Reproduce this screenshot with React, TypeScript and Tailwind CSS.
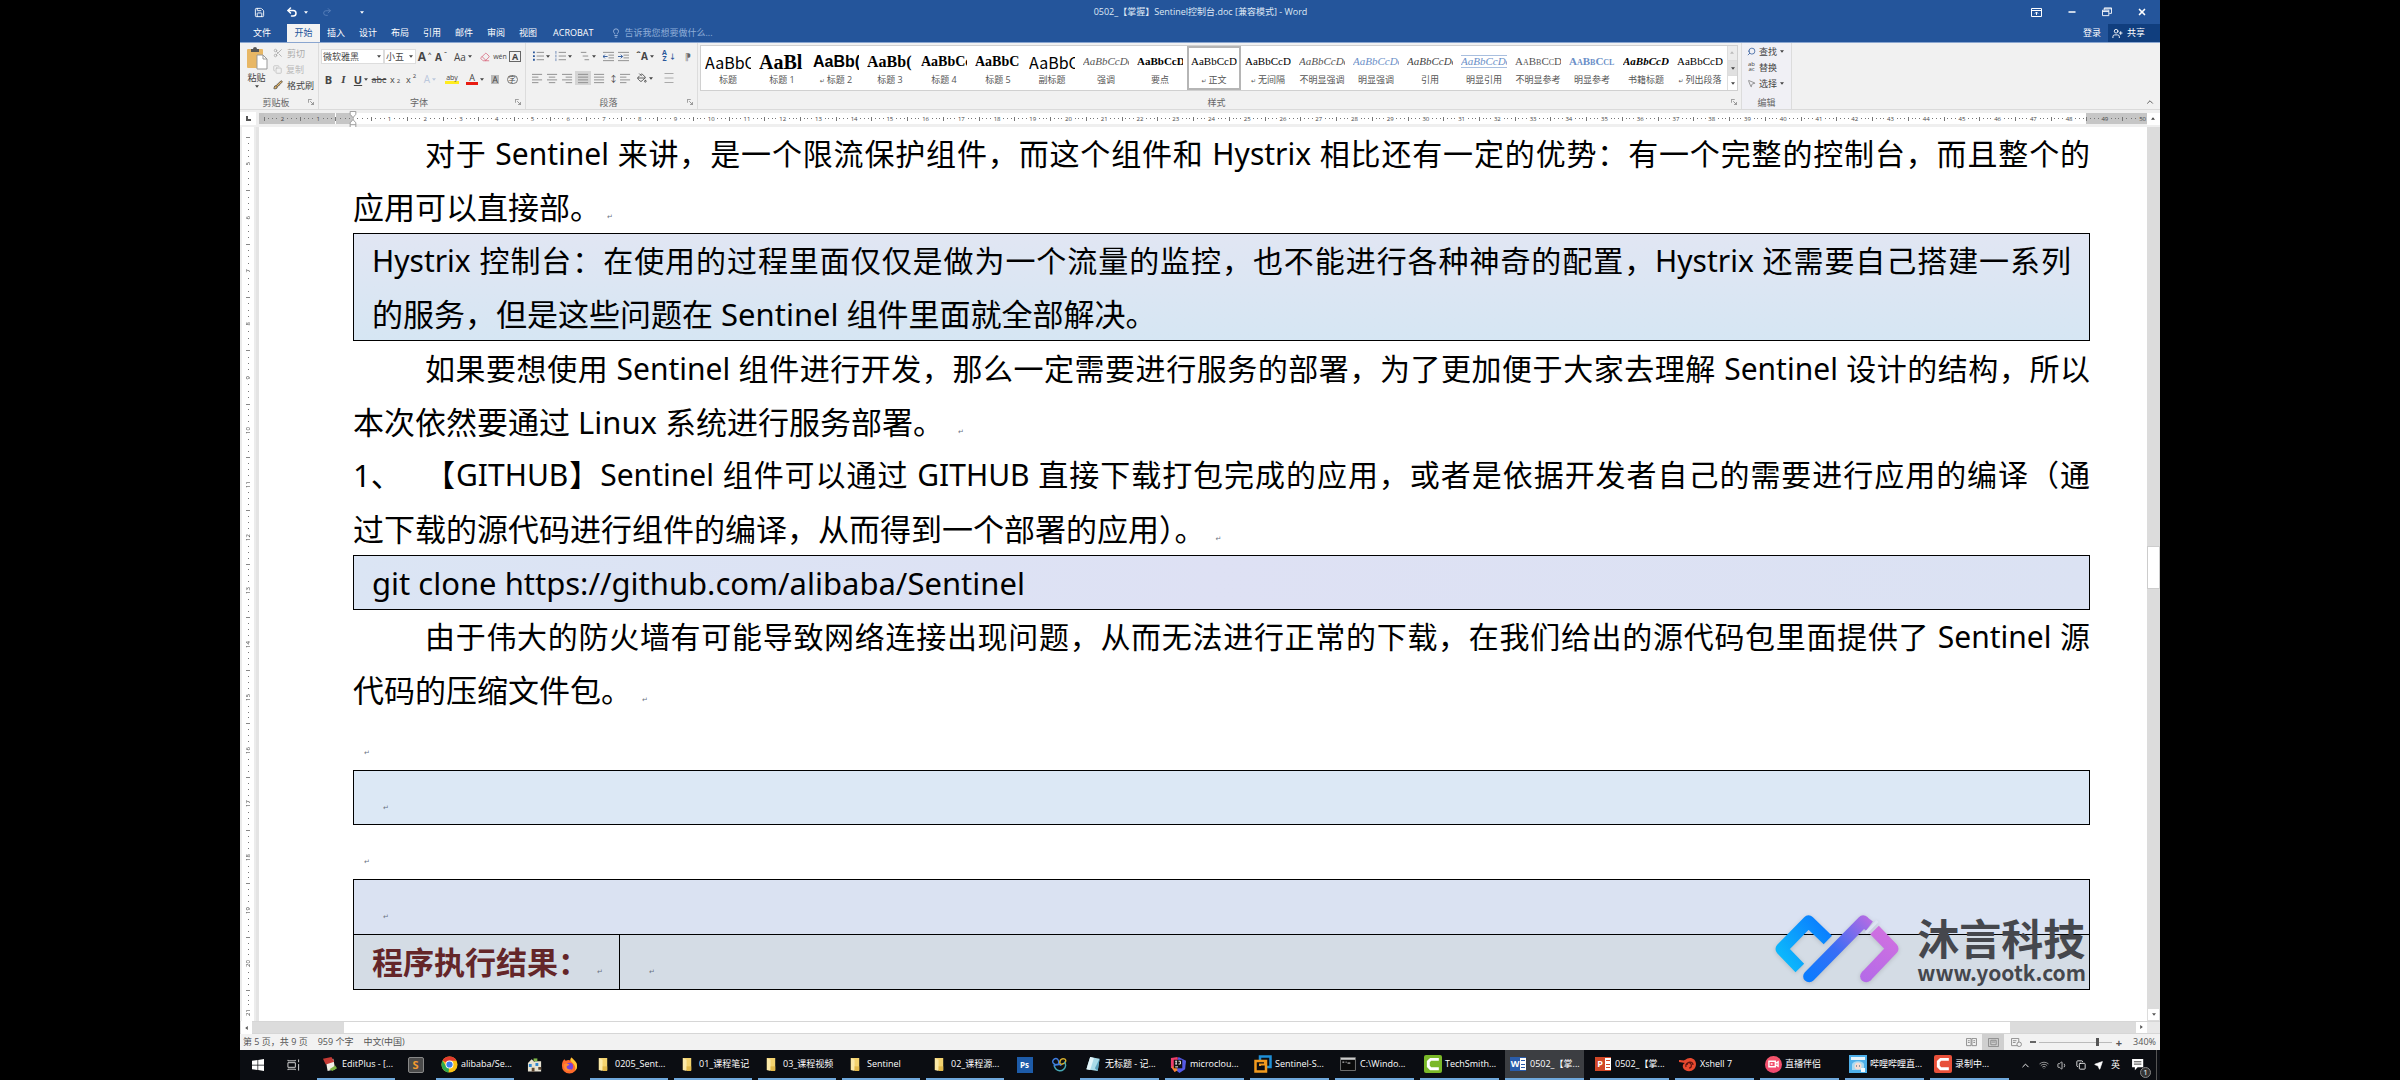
import type { ReactNode } from "react";
import {
  Brush,
  ChevronUp,
  Copy,
  Eraser,
  Lightbulb,
  Minus,
  MousePointer2,
  PaintBucket,
  Save,
  Scissors,
  Search,
  Send,
  Undo2,
  Redo2,
  UserPlus,
  Volume1,
  Wifi,
  X,
} from "lucide-react";

type StyleItem = { label: string; sample: string; look: string; mark?: boolean };

const TABS = ["插入", "设计", "布局", "引用", "邮件", "审阅", "视图", "ACROBAT"];

const STYLES: StyleItem[] = [
  { label: "标题", sample: "AaBbC", look: "text-[16px] font-['Noto_Sans_CJK_SC']" },
  { label: "标题 1", sample: "AaBl", look: "text-[20px] font-bold font-['Liberation_Serif']" },
  { label: "标题 2", sample: "AaBb(", look: "text-[16px] font-bold font-['Liberation_Sans']", mark: true },
  { label: "标题 3", sample: "AaBb(", look: "text-[16px] font-bold font-['Liberation_Serif']" },
  { label: "标题 4", sample: "AaBbCc", look: "text-[14px] font-bold font-['Liberation_Serif']" },
  { label: "标题 5", sample: "AaBbC", look: "text-[14px] font-bold font-['Liberation_Serif']" },
  { label: "副标题", sample: "AaBbC", look: "text-[16px] font-['Noto_Sans_CJK_SC']" },
  { label: "强调", sample: "AaBbCcDc", look: "text-[11px] italic text-[#555] font-['Liberation_Serif']" },
  { label: "要点", sample: "AaBbCcD", look: "text-[11px] font-bold font-['Liberation_Serif']" },
  { label: "正文", sample: "AaBbCcDc", look: "text-[11px] font-['Liberation_Serif']", mark: true },
  { label: "无间隔", sample: "AaBbCcDc", look: "text-[11px] font-['Liberation_Serif']", mark: true },
  { label: "不明显强调", sample: "AaBbCcDc", look: "text-[11px] italic text-[#555] font-['Liberation_Serif']" },
  { label: "明显强调", sample: "AaBbCcDc", look: "text-[11px] italic text-[#6b8fc7] font-['Liberation_Serif']" },
  { label: "引用", sample: "AaBbCcDc", look: "text-[11px] italic text-[#444] font-['Liberation_Serif']" },
  { label: "明显引用", sample: "AaBbCcDc", look: "text-[11px] italic text-[#6b8fc7] border-y border-[#a9bfdf] font-['Liberation_Serif']" },
  { label: "不明显参考", sample: "AaBbCcD", look: "text-[11px] [font-variant:small-caps] text-[#555] font-['Liberation_Serif']" },
  { label: "明显参考", sample: "AaBbCcl", look: "text-[11px] font-bold [font-variant:small-caps] text-[#6b8fc7] font-['Liberation_Serif']" },
  { label: "书籍标题", sample: "AaBbCcD", look: "text-[11px] font-bold italic font-['Liberation_Serif']" },
  { label: "列出段落", sample: "AaBbCcDc", look: "text-[11px] font-['Liberation_Serif']", mark: true },
];

const H_RULER = Array.from({ length: 52 }, (_, i) => i - 2);
const V_RULER = Array.from({ length: 16 }, (_, i) => i + 5);

/* ---------- small pieces ---------- */

function Caret() {
  return (
    <svg viewBox="0 0 6 4" className="h-[3px] w-[4px] shrink-0" fill="currentColor">
      <path d="M0 0h6L3 4z" />
    </svg>
  );
}

function Launcher() {
  return (
    <svg viewBox="0 0 8 8" className="size-[6px]" fill="none" stroke="#777" strokeWidth="1">
      <path d="M.5 5V.5H5M3 3l4 4M7.500 4v3.500H4" />
    </svg>
  );
}

function Mark({ className = "" }: { className?: string }) {
  return <span className={`font-['DejaVu_Sans'] text-[7px] leading-none font-normal text-gray-500 ${className}`}>↵</span>;
}

function Lines({ kind }: { kind: "left" | "center" | "right" | "bullet" | "number" | "multi" | "just" }) {
  const d = {
    left: "M0 1.500h11M0 4.500h7M0 7.500h11M0 10.500h7",
    center: "M0 1.500h11M2 4.500h7M0 7.500h11M2 10.500h7",
    right: "M0 1.500h11M4 4.500h7M0 7.500h11M4 10.500h7",
    just: "M0 1.500h11M0 4.500h11M0 7.500h11M0 10.500h11",
    bullet: "M4 1.500h8M4 5.500h8M4 9.500h8",
    number: "M4 1.500h8M4 5.500h8M4 9.500h8",
    multi: "M2 1.500h6M4 5.500h6M6 9.500h5",
  }[kind];
  return (
    <svg viewBox="0 0 12 12" className="size-[11px]" fill="none" stroke="#8a8a8a" strokeWidth="1">
      <path d={d} />
      {kind === "bullet" && <path d="M0 1.500h2M0 5.500h2M0 9.500h2" stroke="#2b579a" strokeWidth="2" />}
      {kind === "number" && <path d="M1 0v3M1 4v3M1 8v3" stroke="#6a86b5" />}
    </svg>
  );
}

function Indent({ flip }: { flip?: boolean }) {
  return (
    <svg viewBox="0 0 12 12" className="size-[11px]" fill="none" stroke="#8a8a8a">
      <path d="M0 1.500h12M6 4.500h6M6 7.500h6M0 10.500h12" />
      <path d={flip ? "M0 6h5M3 4l2 2-2 2" : "M5 6H0M2 4L0 6l2 2"} stroke="#2b579a" />
    </svg>
  );
}

function Tool({ label, children, className = "" }: { label: string; children: ReactNode; className?: string }) {
  return (
    <button aria-label={label} className={`flex h-[14px] items-center justify-center gap-[2px] ${className}`}>
      {children}
    </button>
  );
}

/* ---------- title bar + tabs ---------- */

function TitleBar() {
  return (
    <header className="bg-[#24559b] text-[9px] text-white">
      <div className="flex h-[24px] items-center">
        <div className="flex flex-1 items-center pl-[14px]">
          <button aria-label="保存"><Save className="size-[11px]" /></button>
          <button aria-label="撤消" className="ml-[21px] flex items-center gap-[6px]">
            <Undo2 className="size-[12px]" strokeWidth={3} />
            <Caret />
          </button>
          <button aria-label="恢复" className="ml-[14px] text-[#5d83bd]"><Redo2 className="size-[10px]" /></button>
          <button aria-label="自定义快速访问工具栏" className="ml-[28px]"><Caret /></button>
        </div>
        <h1 className="text-[#dfe8f5]">0502_【掌握】Sentinel控制台.doc [兼容模式] - Word</h1>
        <div className="flex flex-1 items-center justify-end gap-[25px] pr-[13px]">
          <button aria-label="功能区显示选项">
            <svg viewBox="0 0 11 9" className="h-[9px] w-[11px]" fill="none" stroke="currentColor">
              <path d="M.5 .5h10v8H.5zM.5 2.500h10M5.500 7V4M4 5.500L5.500 4 7 5.500" />
            </svg>
          </button>
          <button aria-label="最小化"><Minus className="size-[10px]" strokeWidth={4} /></button>
          <button aria-label="向下还原">
            <svg viewBox="0 0 11 11" className="size-[10px]" fill="none" stroke="currentColor">
              <path d="M.5 3.500h7v6h-7zM.5 5h7M2.500 3V1h8v6H8M2.500 2h8" />
            </svg>
          </button>
          <button aria-label="关闭"><X className="size-[10px]" strokeWidth={4} /></button>
        </div>
      </div>
      <nav className="flex h-[19px] items-stretch border-b border-[#8aa6d0]">
        <button className="w-[47px] pr-[3px]">文件</button>
        <button className="w-[33px] bg-[#f3f3f3] text-[#24559b]">开始</button>
        {TABS.map((t) => (
          <button key={t} className={t === "ACROBAT" ? "px-[9px]" : "px-[7px]"}>{t}</button>
        ))}
        <label className="ml-[8px] flex items-center gap-[4px] text-[#a9c1e4]">
          <Lightbulb className="size-[10px]" />
          <input
            aria-label="操作说明搜索"
            placeholder="告诉我您想要做什么..."
            className="w-[120px] bg-transparent outline-none placeholder:text-[#8fadd8]"
          />
        </label>
        <button className="ml-auto px-[7px]">登录</button>
        <button className="flex w-[52px] items-center gap-[4px] bg-[#103e7e] pl-[4px]">
          <UserPlus className="size-[11px]" />
          共享
        </button>
      </nav>
    </header>
  );
}

/* ---------- ribbon ---------- */

function Group({ label, launcher, children, className = "" }: { label: string; launcher?: boolean; children: ReactNode; className?: string }) {
  return (
    <section className={`flex flex-col border-r border-[#dcdcdc] ${className}`}>
      <div className="flex-1">{children}</div>
      <div className="flex h-[14px] items-center px-[4px] text-[9px] text-[#666]">
        <span className="flex-1 text-center">{label}</span>
        {launcher && <button aria-label={`${label}设置`}><Launcher /></button>}
      </div>
    </section>
  );
}

function Ribbon() {
  return (
    <div className="flex h-[66px] bg-[#f1f1f1] text-[9px] leading-none text-[#444]">
      <Group label="剪贴板" launcher className="w-[79px] shrink-0">
        <div className="flex pt-[3px]">
          <button className="flex w-[33px] flex-col items-center gap-[3px]">
            <svg viewBox="0 0 22 24" className="h-[24px] w-[22px]">
              <rect x="1" y="3" width="16" height="19" rx="1" fill="#e8b765" />
              <path d="M5 6V3h2a2 2 0 0 1 4 0h2v3z" fill="#555" />
              <path d="M11 9h6l4 4v10H11z" fill="#fff" stroke="#999" />
              <path d="M17 9v4h4" fill="none" stroke="#999" />
            </svg>
            粘贴
            <Caret />
          </button>
          <div className="flex flex-col gap-[2px]">
            <button className="flex h-[14px] items-center gap-[4px] text-[#aaa]"><Scissors className="size-[10px]" />剪切</button>
            <button className="flex h-[14px] items-center gap-[4px] text-[#bbb]"><Copy className="size-[9px]" />复制</button>
            <button className="flex h-[14px] items-center gap-[4px]"><Brush className="size-[10px]" fill="#e8b765" />格式刷</button>
          </div>
        </div>
      </Group>

      <Group label="字体" launcher className="w-[207px] shrink-0">
        <div className="flex items-center pt-[6px] pl-[2px]">
          <div className="relative">
            <select aria-label="字体" className="h-[15px] w-[63px] appearance-none border border-[#ddd] bg-white pl-px text-[9px] leading-none">
              <option>微软雅黑</option>
            </select>
            <span className="pointer-events-none absolute top-[6px] right-[3px]"><Caret /></span>
          </div>
          <div className="relative">
            <select aria-label="字号" className="h-[15px] w-[32px] appearance-none border border-[#ddd] bg-white pl-px text-[9px] leading-none">
              <option>小五</option>
            </select>
            <span className="pointer-events-none absolute top-[6px] right-[3px]"><Caret /></span>
          </div>
          <Tool label="增大字号" className="w-[17px] text-[12px] font-bold">A<sup className="text-[6px]">^</sup></Tool>
          <Tool label="减小字号" className="w-[16px] text-[10px] font-bold">A<sup className="text-[6px]">ˇ</sup></Tool>
          <Tool label="更改大小写" className="w-[28px] text-[10px]">Aa<Caret /></Tool>
          <Tool label="清除格式" className="w-[16px] text-[#d96a80]"><Eraser className="size-[10px]" /></Tool>
          <Tool label="拼音指南" className="w-[14px] text-[7px]">wén</Tool>
          <Tool label="字符边框" className="w-[16px]"><span className="border border-[#666] px-[2px] text-[9px] font-bold">A</span></Tool>
        </div>
        <div className="flex items-center pt-[8px] pl-[2px] text-[11px]">
          <Tool label="加粗" className="w-[15px] font-bold">B</Tool>
          <Tool label="倾斜" className="w-[15px] font-['Liberation_Serif'] font-bold italic">I</Tool>
          <Tool label="下划线" className="w-[20px] font-bold underline">U<Caret /></Tool>
          <Tool label="删除线" className="w-[16px] text-[9px] line-through">abc</Tool>
          <Tool label="下标" className="w-[16px] text-[9px]">x<sub className="text-[6px]">2</sub></Tool>
          <Tool label="上标" className="w-[16px] text-[9px]">x<sup className="text-[6px]">2</sup></Tool>
          <Tool label="文本效果" className="w-[22px] text-[10px] text-[#bbc8dd]">A<Caret /></Tool>
          <Tool label="突出显示" className="w-[22px] text-[7px]"><span className="border-b-3 border-[#ffec1f] px-px">aby</span></Tool>
          <Tool label="字体颜色" className="w-[24px] text-[9px]"><span className="border-b-3 border-[#e81c12] px-[3px]">A</span><Caret /></Tool>
          <Tool label="字符底纹" className="w-[16px] text-[9px]"><span className="bg-[#bbb] px-px">A</span></Tool>
          <Tool label="带圈字符" className="w-[18px]"><span className="rounded-full border border-[#777] px-px text-[7px]">字</span></Tool>
        </div>
      </Group>

      <Group label="段落" launcher className="w-[172px] shrink-0">
        <div className="flex items-center pt-[6px] pl-[4px]">
          <Tool label="项目符号" className="w-[22px]"><Lines kind="bullet" /><Caret /></Tool>
          <Tool label="编号" className="w-[22px]"><Lines kind="number" /><Caret /></Tool>
          <Tool label="多级列表" className="w-[27px]"><Lines kind="multi" /><Caret /></Tool>
          <Tool label="减少缩进" className="w-[15px]"><Indent /></Tool>
          <Tool label="增加缩进" className="w-[15px]"><Indent flip /></Tool>
          <Tool label="中文版式" className="w-[28px] text-[10px] font-bold">ˆA<Caret /></Tool>
          <Tool label="排序" className="w-[20px] text-[7px] font-bold text-[#2b579a]"><span className="leading-[6px]">A<br />Z</span>↓</Tool>
          <Tool label="显示编辑标记" className="w-[18px] text-[9px] text-[#666]">⁋</Tool>
        </div>
        <div className="flex items-center pt-[8px] pl-[4px]">
          <Tool label="左对齐" className="w-[15px]"><Lines kind="left" /></Tool>
          <Tool label="居中" className="w-[15px]"><Lines kind="center" /></Tool>
          <Tool label="右对齐" className="w-[15px]"><Lines kind="right" /></Tool>
          <Tool label="两端对齐" className="w-[16px] bg-[#d5d5d5]"><Lines kind="just" /></Tool>
          <Tool label="分散对齐" className="w-[17px]"><Lines kind="just" /></Tool>
          <Tool label="行距" className="w-[24px]">↕<Lines kind="left" /></Tool>
          <Tool label="底纹" className="w-[26px]"><PaintBucket className="size-[10px]" /><Caret /></Tool>
          <Tool label="边框" className="w-[22px]">
            <svg viewBox="0 0 10 10" className="size-[10px]" fill="none" stroke="#aaa"><path d="M.5 .5h9M.5 5h9M.5 9.500h9" /></svg>
          </Tool>
        </div>
      </Group>

      <Group label="样式" launcher className="shrink-0">
        <div className="mt-[2px] mr-[3px] ml-[2px] flex h-[46px] border border-[#d0d0d0] bg-white">
          {STYLES.map((s) => (
            <button
              key={s.label}
              className={`flex w-[54px] flex-col items-center border-2 ${s.label === "正文" ? "border-[#b5b5b5]" : "border-transparent"}`}
            >
              <span className="flex h-[27px] w-[46px] items-center overflow-hidden whitespace-nowrap text-black">
                <span className={s.look}>{s.sample}</span>
              </span>
              <span className="text-[9px] whitespace-nowrap text-[#555]">
                {s.mark && <span className="mr-[2px] font-['DejaVu_Sans'] text-[6px]">↵</span>}
                {s.label}
              </span>
            </button>
          ))}
          <div className="flex w-[10px] flex-col border-l border-[#ddd] bg-[#ececec]">
            <button aria-label="上一行" className="flex flex-1 rotate-180 items-center justify-center text-[#bbb]"><Caret /></button>
            <button aria-label="下一行" className="flex flex-1 items-center justify-center border-y border-[#ddd] bg-[#e0e0e0]"><Caret /></button>
            <button aria-label="更多样式" className="flex flex-1 items-center justify-center bg-white"><Caret /></button>
          </div>
        </div>
      </Group>

      <Group label="编辑" className="w-[50px] shrink-0 bg-[#f0f0f5]">
        <div className="flex flex-col gap-[2px] pt-[1px] pl-[5px]">
          <button className="flex h-[14px] items-center gap-[3px]"><Search className="size-[9px] -scale-x-100 text-[#2b579a]" />查找<Caret /></button>
          <button className="flex h-[14px] items-center gap-[3px]"><span className="w-[9px] text-[6px] leading-[5px]">ab<br />ac</span>替换</button>
          <button className="flex h-[14px] items-center gap-[3px]"><MousePointer2 className="size-[9px] text-[#777]" />选择<Caret /></button>
        </div>
      </Group>

      <button aria-label="折叠功能区" className="mt-auto mr-[5px] mb-[2px] ml-auto"><ChevronUp className="size-[10px]" /></button>
    </div>
  );
}

/* ---------- rulers ---------- */

function Dots({ vertical }: { vertical?: boolean }) {
  return (
    <span className={`flex flex-1 items-center justify-evenly ${vertical ? "flex-col" : ""}`}>
      <i className="size-px bg-[#777]" />
      <i className="size-px bg-[#777]" />
      <i className="size-px bg-[#777]" />
    </span>
  );
}

function TopRuler() {
  return (
    <div className="flex h-[18px] items-center border-t border-[#dadada] bg-[#efefef] text-[6px] leading-none text-[#444]">
      <div className="mr-[3px] flex h-[13px] w-[16px] items-center justify-center bg-white">
        <i className="size-[5px] border-b-2 border-l-2 border-[#555]" />
      </div>
      <div className="h-[11px] w-[5px] bg-[#c3c3c3]" />
      <div className="relative flex h-[11px] flex-1 bg-white">
        {H_RULER.map((n) => (
          <div key={n} className={`flex flex-1 items-center ${n < 0 || n > 48 ? "bg-[#c6c6c6]" : ""}`}>
            <i className="h-[4px] w-px bg-[#777]" />
            <span className={`flex flex-1 self-stretch ${n === 0 ? "bg-[#c6c6c6]" : ""}`}><Dots /></span>
            {n !== 0 && <span>{Math.abs(n)}</span>}
            <Dots />
          </div>
        ))}
        <svg viewBox="0 0 8 18" className="absolute top-[-2px] left-[85px] h-[17px] w-[8px]" fill="#fff" stroke="#999">
          <path d="M1 .5h6v3L4 7 1 3.500zM1 17.500v-5L4 9l3 3.500v5zM1 14.500h6" />
        </svg>
      </div>
      <div className="flex h-[11px] w-[25px] items-center bg-[#c6c6c6]">
        <i className="h-[4px] w-px bg-[#777]" />
        <Dots />
        <span className="mr-px">50</span>
      </div>
      <button aria-label="向上滚动" className="flex h-[12px] w-[13px] rotate-180 items-center justify-center bg-white"><Caret /></button>
    </div>
  );
}

function SideRuler() {
  return (
    <div className="flex w-[19px] shrink-0 flex-col items-center border-r-3 border-[#e4e4e4] bg-[#ececec] text-[6px] leading-none text-[#444]">
      <div className="h-[10px] w-[12px] bg-white" />
      {V_RULER.map((n) => (
        <div key={n} className="flex w-[12px] flex-1 flex-col items-center bg-white">
          <i className="h-px w-[4px] bg-[#888]" />
          <Dots vertical />
          <span className="rotate-180 [writing-mode:vertical-rl]">{n}</span>
          <Dots vertical />
        </div>
      ))}
      <div className="flex h-[31px] w-[12px] flex-col items-center bg-white">
        <i className="h-px w-[4px] bg-[#888]" />
        <Dots vertical />
        <span className="mb-[5px] rotate-180 [writing-mode:vertical-rl]">21</span>
      </div>
    </div>
  );
}

/* ---------- document ---------- */

// full lines are stretched to both margins, so they start a touch smaller
function Line({ children, indent, full }: { children: ReactNode; indent?: boolean; full?: boolean }) {
  return (
    <span className={`block h-[53px] leading-[54px] whitespace-nowrap ${indent ? "pl-[72px]" : ""} ${full ? "text-[30px] [text-align-last:justify]" : ""}`}>
      {children}
    </span>
  );
}

function EmptyLine({ className = "" }: { className?: string }) {
  return (
    <div className={`pt-[33px] text-[7px] leading-none ${className}`}>
      <Mark />
    </div>
  );
}

function Watermark() {
  return (
    <div className="absolute right-[61px] bottom-[34px] flex items-center gap-[17px]">
      <svg viewBox="100 95 380 225" className="h-[75px] w-[127px] drop-shadow-sm" fill="none" strokeWidth="36" strokeLinejoin="round">
        <defs>
          <linearGradient id="wm-left" gradientUnits="userSpaceOnUse" x1="110" y1="250" x2="270" y2="130">
            <stop offset="0" stopColor="#0cc0fb" />
            <stop offset="1" stopColor="#0a78ff" />
          </linearGradient>
          <linearGradient id="wm-mid" gradientUnits="userSpaceOnUse" x1="200" y1="290" x2="400" y2="110">
            <stop offset="0" stopColor="#0a7cff" />
            <stop offset=".45" stopColor="#3a6df5" />
            <stop offset="1" stopColor="#bf6be2" />
          </linearGradient>
          <linearGradient id="wm-right" gradientUnits="userSpaceOnUse" x1="440" y1="150" x2="370" y2="300">
            <stop offset="0" stopColor="#d070e0" />
            <stop offset="1" stopColor="#b46ae8" />
          </linearGradient>
        </defs>
        <path d="M264 179L206 123 125 206 180 263" stroke="url(#wm-left)" />
        <path d="M208 288L370 123" stroke="url(#wm-mid)" strokeLinecap="round" />
        <path d="M370 123L389 137" stroke="url(#wm-mid)" strokeWidth="34" />
        <path d="M404 149L458 205 379 288" stroke="url(#wm-right)" />
        <circle cx="379" cy="288" r="18" fill="url(#wm-right)" stroke="none" />
        <path d="M413 122L378 158" stroke="#dce3f2" strokeWidth="9" />
      </svg>
      <div className="font-['Noto_Sans_CJK_SC',sans-serif] font-bold text-[#45474d]">
        <div className="text-[42px] leading-[44px]">沐言科技</div>
        <div className="text-center text-[21px] leading-[26px]">www.yootk.com</div>
      </div>
    </div>
  );
}

function Document() {
  return (
    <main className="relative min-w-0 flex-1 overflow-hidden bg-white pr-[57px] pl-[94px] font-['Noto_Sans','Noto_Sans_CJK_SC',sans-serif] text-[31px] text-black">
      <p>
        <Line indent full>对于 Sentinel 来讲，是一个限流保护组件，而这个组件和 Hystrix 相比还有一定的优势：有一个完整的控制台，而且整个的</Line>
        <Line>应用可以直接部。<Mark className="ml-[6px]" /></Line>
      </p>
      <p className="mb-px border border-black bg-linear-to-b from-[#e1e6f3] to-[#d6e6f3] px-[18px]">
        <Line full>Hystrix 控制台：在使用的过程里面仅仅是做为一个流量的监控，也不能进行各种神奇的配置，Hystrix 还需要自己搭建一系列</Line>
        <Line>的服务，但是这些问题在 Sentinel 组件里面就全部解决。</Line>
      </p>
      <p>
        <Line indent full>如果要想使用 Sentinel 组件进行开发，那么一定需要进行服务的部署，为了更加便于大家去理解 Sentinel 设计的结构，所以</Line>
        <Line>本次依然要通过 Linux 系统进行服务部署。<Mark className="ml-[14px]" /></Line>
      </p>
      <div>
        <div className="flex">
          <span className="w-[72px] leading-[54px]">1、</span>
          <span className="h-[53px] flex-1"><Line full>【GITHUB】Sentinel 组件可以通过 GITHUB 直接下载打包完成的应用，或者是依据开发者自己的需要进行应用的编译（通</Line></span>
        </div>
        <Line>过下载的源代码进行组件的编译，从而得到一个部署的应用）。<Mark className="ml-[10px]" /></Line>
      </div>
      <p className="border border-black bg-linear-to-r from-[#dbe5f4] via-[#dee1f4] to-[#dbe2f3] px-[18px]">
        <Line>git clone https://github.com/alibaba/Sentinel</Line>
      </p>
      <p>
        <Line indent full>由于伟大的防火墙有可能导致网络连接出现问题，从而无法进行正常的下载，在我们给出的源代码包里面提供了 Sentinel 源</Line>
        <Line>代码的压缩文件包。<Mark className="ml-[10px]" /></Line>
      </p>
      <EmptyLine className="h-[54px] pl-[11px]" />
      <EmptyLine className="h-[55px] border border-black bg-[#dce8f5] pl-[29px]" />
      <EmptyLine className="h-[54px] pl-[11px]" />
      <table className="w-full border-collapse">
        <tbody>
          <tr className="h-[55px] bg-[#dae2f2]">
            <td colSpan={2} className="border border-black pt-[33px] pl-[29px] align-top text-[7px] leading-none"><Mark /></td>
          </tr>
          <tr className="h-[55px] bg-[#d4dce5]">
            <th scope="row" className="w-[266px] border border-black pl-[18px] text-left leading-[53px] font-bold whitespace-nowrap text-[#642629]">
              程序执行结果：<Mark className="ml-[8px]" />
            </th>
            <td className="border border-black pt-[33px] pl-[29px] align-top text-[7px] leading-none"><Mark /></td>
          </tr>
        </tbody>
      </table>
      <Watermark />
    </main>
  );
}

function VScroll() {
  return (
    <div className="flex w-[13px] shrink-0 flex-col bg-[#dcdcdc] text-[#555]">
      <div className="flex-1" />
      <div className="h-[43px] border border-[#ccc] bg-white" />
      <div className="flex-1" />
      <button aria-label="向下滚动" className="m-px flex h-[11px] items-center justify-center bg-white"><Caret /></button>
    </div>
  );
}

function HScroll() {
  return (
    <div className="flex h-[13px] items-stretch border-y border-[#d6d6d6] bg-[#dcdcdc] text-[#555]">
      <button aria-label="向左滚动" className="flex w-[13px] rotate-90 items-center justify-center bg-white"><Caret /></button>
      <div className="w-[91px]" />
      <div className="flex-1 bg-white" />
      <div className="w-[126px]" />
      <button aria-label="向右滚动" className="flex w-[11px] -rotate-90 items-center justify-center bg-white"><Caret /></button>
      <div className="w-[13px] bg-[#e8e8e8]" />
    </div>
  );
}

function StatusBar() {
  return (
    <div className="flex h-[16px] items-center bg-[#f2f2f2] pr-[4px] pl-[3px] text-[9px] text-[#555]">
      <span>第 5 页，共 9 页</span>
      <span className="ml-[10px]">959 个字</span>
      <span className="ml-[10px]">中文(中国)</span>
      <div className="ml-auto flex items-center text-[#888]">
        <button aria-label="阅读视图" className="flex h-[16px] w-[22px] items-center justify-center">
          <svg viewBox="0 0 12 10" className="h-[9px] w-[11px]" fill="none" stroke="currentColor"><path d="M.5 .5h5v8h-5zM6.500 .5h5v8h-5zM2 3h2M2 5h2M8 3h2M8 5h2" /></svg>
        </button>
        <button aria-label="页面视图" className="flex h-[16px] w-[22px] items-center justify-center bg-[#cfcfcf]">
          <svg viewBox="0 0 12 10" className="h-[9px] w-[11px]" fill="none" stroke="currentColor"><path d="M.5 .5h11v9H.5zM3 2.500h6v5H3zM4 4.500h4" /></svg>
        </button>
        <button aria-label="Web 版式视图" className="flex h-[16px] w-[24px] items-center justify-center">
          <svg viewBox="0 0 12 10" className="h-[9px] w-[11px]" fill="none" stroke="currentColor"><path d="M.5 .5h8v8h-8zM2 3h4M2 5h3" /><circle cx="9" cy="7" r="2.500" fill="#f2f2f2" /></svg>
        </button>
      </div>
      <button aria-label="缩小" className="ml-[2px] h-[2px] w-[6px] bg-[#666]" />
      <input
        type="range"
        aria-label="显示比例"
        min={0}
        max={100}
        defaultValue={82}
        className="mx-[3px] h-[8px] w-[73px] appearance-none bg-[linear-gradient(#bbb,#bbb)] bg-[length:100%_1px] bg-center bg-no-repeat [&::-webkit-slider-thumb]:h-[8px] [&::-webkit-slider-thumb]:w-[3px] [&::-webkit-slider-thumb]:appearance-none [&::-webkit-slider-thumb]:bg-[#555]"
      />
      <button aria-label="放大" className="w-[8px] text-[11px] leading-none font-bold">+</button>
      <span className="ml-[9px] w-[24px] text-right">340%</span>
    </div>
  );
}

/* ---------- taskbar ---------- */

function FolderIcon() {
  return (
    <svg viewBox="0 0 14 16" className="h-[15px] w-[13px]">
      <path d="M2 1h9v13H2z" fill="#f4d36f" />
      <path d="M2 1l4 2v12l-4-1z" fill="#fbe9a8" />
      <path d="M6 10h5v5H6z" fill="#e2b94b" />
    </svg>
  );
}

function Badge({ className, children }: { className: string; children: ReactNode }) {
  return <span className={`flex size-[16px] items-center justify-center font-bold ${className}`}>{children}</span>;
}

function ChromeIcon() {
  return (
    <svg viewBox="0 0 18 18" className="size-[17px]">
      <circle cx="9" cy="9" r="8.500" fill="#fbc116" />
      <path d="M9 9L1.600 4.700A8.500 8.500 0 0 1 16.500 5H9z" fill="#e33b2e" />
      <path d="M9 9l-1 8.400A8.500 8.500 0 0 1 1.600 4.700L5.500 11z" fill="#2da94f" />
      <circle cx="9" cy="9" r="4.200" fill="#fff" />
      <circle cx="9" cy="9" r="3.300" fill="#3b7ded" />
    </svg>
  );
}

function EditPlusIcon() {
  return (
    <svg viewBox="0 0 17 17" className="size-[16px]">
      <path d="M4 5l8-2 2 11-8 2z" fill="#f1efe6" />
      <path d="M1 3l9-2 3 5-9 3z" fill="#c43a35" />
      <path d="M8 14l6-4 2 3-5 3z" fill="#7cb342" />
    </svg>
  );
}

function FirefoxIcon() {
  return (
    <svg viewBox="0 0 18 18" className="size-[17px]">
      <path d="M9 17.500A8 8 0 0 1 1 9c0-3 1-5 2.500-6.500L5 4c2-1 4-1 5 0 0-2 .5-3 1.500-3.500C12 3 17 4 17 9.500a8 8 0 0 1-8 8z" fill="#ff6a2b" />
      <path d="M11.500 .5C12 3 17 4 17 9.500c0 2-.8 4-2 5C16 9 13 7 10 4c0-2 .5-3 1.500-3.500z" fill="#ffc832" />
      <circle cx="9" cy="10" r="3.800" fill="#7543d9" />
      <path d="M3 8c2-2 4-1 6 0-1 1.500-3 1-3 2.500S8 14 11 13c-3 4-9 1-8-5z" fill="#ff8a30" />
    </svg>
  );
}

function StoreIcon() {
  return (
    <svg viewBox="0 0 17 16" className="size-[16px]">
      <path d="M1 6l4-4 4 4v9H1zM8 4h7v11H8z" fill="#e7e2d2" />
      <path d="M2 7h3v3H2zM9 6h3v3H9z" fill="#2e86d1" />
      <path d="M5 11h3v4H5zM12 10h3v3h-3z" fill="#5c4733" />
      <path d="M7 1h4v3H7z" fill="#7fb84b" />
    </svg>
  );
}

function KnotIcon() {
  return (
    <svg viewBox="0 0 18 18" className="size-[17px]" fill="none" strokeWidth="1.500">
      <path d="M8 8C3 9 0 5 3 2.500S9 3 8 8z" stroke="#3f7de0" />
      <path d="M10 8c-2-4 1-7 4-6s2 5-4 6z" stroke="#d9b12f" />
      <path d="M3.500 8a6 6 0 1 0 12 1c0-1-.5-3-1.500-4" stroke="#47a8b5" />
      <path d="M3 10c2-3 6-3 8-1" stroke="#3f7de0" />
    </svg>
  );
}

function NotepadIcon() {
  return (
    <svg viewBox="0 0 16 17" className="size-[16px]">
      <path d="M5 1l10 2-2 13L1 14z" fill="#a9dbe8" />
      <path d="M5 1l4 1-4 13-4-1z" fill="#e3f5f9" />
      <path d="M10 13l5-10-2 13z" fill="#5aa2bd" />
    </svg>
  );
}

function IdeaIcon() {
  return (
    <svg viewBox="0 0 18 18" className="size-[17px]">
      <path d="M1 2l7-1 1 8-4 8-4-5z" fill="#ef3e6b" />
      <path d="M9 1l8 4-1 9-6 4-5-4z" fill="#5559e6" />
      <path d="M2 12l4-3 2 6-3 2z" fill="#f78b2c" />
      <path d="M4 4h9v9H4z" fill="#111" />
      <path d="M5.500 5.500h2M6.500 5.500v3M5.500 8.500h2M9 5.500h2v3H9M5.500 11.500h3" stroke="#fff" fill="none" />
    </svg>
  );
}

function VmIcon() {
  return (
    <svg viewBox="0 0 18 18" className="size-[18px]" fill="none" strokeWidth="2.500">
      <path d="M6 5V1.500h10.500V12H13" stroke="#1f8fd6" />
      <path d="M1.500 6h10.500v10.500H1.500z" stroke="#f39a1e" />
      <path d="M6 11V9.500h5V5.500" stroke="#f39a1e" strokeWidth="2" />
    </svg>
  );
}

function CmdIcon() {
  return (
    <svg viewBox="0 0 17 15" className="h-[14px] w-[16px]">
      <path d="M.5 .5h16v14H.5z" fill="#0a0a0a" stroke="#777" />
      <path d="M1 1h15v2H1z" fill="#ccc" />
      <path d="M2.500 5.500h2M6 5.500h1M8 6.500h3" stroke="#eee" />
    </svg>
  );
}

function CamtasiaIcon({ className }: { className: string }) {
  return (
    <span className={`flex size-[18px] items-center justify-center rounded-[2px] ${className}`}>
      <svg viewBox="0 0 12 12" className="size-[14px]" fill="none" stroke="#fff" strokeWidth="2.500">
        <path d="M11 2H4L2 4v4l2 2h7" />
      </svg>
    </span>
  );
}

function OfficeIcon({ letter, className }: { letter: string; className: string }) {
  return (
    <span className={`flex h-[14px] w-[16px] items-stretch ${className}`}>
      <span className="flex w-[10px] items-center justify-center text-[9px] font-bold text-white">{letter}</span>
      <span className="my-px flex flex-1 flex-col justify-evenly bg-white px-px">
        <i className="h-px bg-current" />
        <i className="h-px bg-current" />
        <i className="h-px bg-current" />
      </span>
    </span>
  );
}

function XshellIcon() {
  return (
    <svg viewBox="0 0 18 16" className="h-[16px] w-[18px]">
      <path d="M0 4c3 0 4 1 6 0 4-4 11-2 11 4s-6 9-11 6c-3-2-3-6 0-7L0 6z" fill="#e8492f" />
      <path d="M7 11c-1-3 2-5 4-4s2 5-1 5M8 9c0-4 6-4 6 0" fill="none" stroke="#5c1410" strokeWidth="1.200" />
    </svg>
  );
}

function LiveIcon() {
  return (
    <span className="flex size-[17px] items-center justify-center rounded-full bg-linear-to-b from-[#f4556b] to-[#f0476f]">
      <svg viewBox="0 0 12 8" className="h-[8px] w-[11px]" fill="none" stroke="#fff" strokeWidth="1.500">
        <path d="M1 1h7v6H1zM8 3.500L11 1.500v5L8 4.500M3 4h2" />
      </svg>
    </span>
  );
}

function BiliIcon() {
  return (
    <svg viewBox="0 0 18 18" className="size-[18px]">
      <path d="M0 0h18v18H0z" fill="#4eb0ea" />
      <path d="M2 2h14v3H2z" fill="#e9f6fd" />
      <path d="M3 10c0-5 12-5 12 0v5H3z" fill="#a9daf2" />
      <circle cx="9" cy="11" r="3.500" fill="#f6dcd2" />
      <path d="M7 11h1M10 11h1" stroke="#27597c" />
      <path d="M12 13h4v4h-4z" fill="#f4fbff" />
    </svg>
  );
}

type Task = { name: string; icon: ReactNode; small?: boolean; wide?: boolean; active?: boolean };

const TASKS: Task[] = [
  { name: "EditPlus - [...", icon: <EditPlusIcon /> },
  { name: "Sublime Text", icon: <Badge className="rounded-[2px] border border-[#888] bg-[#4b4b4b] text-[11px] text-[#f29a2e]">S</Badge>, small: true },
  { name: "alibaba/Se...", icon: <ChromeIcon /> },
  { name: "商店", icon: <StoreIcon />, small: true },
  { name: "Firefox", icon: <FirefoxIcon />, small: true },
  { name: "0205_Sent...", icon: <FolderIcon /> },
  { name: "01_课程笔记", icon: <FolderIcon /> },
  { name: "03_课程视频", icon: <FolderIcon /> },
  { name: "Sentinel", icon: <FolderIcon /> },
  { name: "02_课程源...", icon: <FolderIcon /> },
  { name: "Photoshop", icon: <Badge className="bg-[#1d5ba8] text-[8px] text-white">Ps</Badge>, small: true },
  { name: "Navicat", icon: <KnotIcon />, small: true },
  { name: "无标题 - 记...", icon: <NotepadIcon />, wide: true },
  { name: "microclou...", icon: <IdeaIcon />, wide: true },
  { name: "Sentinel-S...", icon: <VmIcon />, wide: true },
  { name: "C:\\Windo...", icon: <CmdIcon />, wide: true },
  { name: "TechSmith...", icon: <CamtasiaIcon className="bg-[#7ab829]" />, wide: true },
  { name: "0502_【掌...", icon: <OfficeIcon letter="W" className="bg-[#2a5caa] text-[#2a5caa]" />, wide: true, active: true },
  { name: "0502_【掌...", icon: <OfficeIcon letter="P" className="bg-[#d04727] text-[#d04727]" />, wide: true },
  { name: "Xshell 7", icon: <XshellIcon />, wide: true },
  { name: "直播伴侣", icon: <LiveIcon />, wide: true },
  { name: "哔哩哔哩直...", icon: <BiliIcon />, wide: true },
  { name: "录制中...", icon: <CamtasiaIcon className="bg-[#e8503a]" />, wide: true },
];

function Taskbar() {
  return (
    <footer className="flex h-[30px] items-stretch bg-[#0b0d12] text-[9px] text-white">
      <button aria-label="开始" className="flex w-[36px] items-center justify-center">
        <svg viewBox="0 0 12 12" className="size-[12px]" fill="#fff"><path d="M0 1.700L5.500 1v4.700H0zM6.200 .9L12 0v5.700H6.200zM0 6.400h5.500V11L0 10.300zM6.200 6.400H12V12l-5.800-.9z" /></svg>
      </button>
      <button aria-label="任务视图" className="mr-[6px] flex w-[35px] items-center justify-center">
        <svg viewBox="0 0 14 12" className="h-[12px] w-[13px]" fill="none" stroke="#ddd"><path d="M1 .5v1h8v-1M1 3.500h8v5H1zM1 11.500v-1h8v1M12.500 0v3M12.500 5v7" /></svg>
      </button>
      <div className="flex gap-[6px]">
        {TASKS.map((t, i) =>
          t.small ? (
            <button key={i} aria-label={t.name} className="flex w-[29px] items-center justify-center">{t.icon}</button>
          ) : (
            <button
              key={i}
              className={`flex items-center gap-[3px] border-b-2 border-[#6fa8dc] pl-[4px] whitespace-nowrap ${t.wide ? "w-[79px]" : "w-[78px]"} ${t.active ? "bg-[#3c3e42]" : ""}`}
            >
              <span className="flex w-[18px] shrink-0 justify-center">{t.icon}</span>
              {t.name}
            </button>
          ),
        )}
      </div>
      <div className="ml-auto flex items-center gap-[8px] pr-[3px]">
        <ChevronUp className="size-[11px]" />
        <Wifi className="size-[10px] text-[#aaa]" />
        <Volume1 className="size-[11px] text-[#ccc]" />
        <Copy className="size-[10px]" />
        <Send className="size-[9px]" fill="currentColor" />
        <span>英</span>
        <button aria-label="通知" className="relative ml-[4px]">
          <svg viewBox="0 0 16 14" className="h-[13px] w-[15px]"><path d="M0 0h12v9H6l-3 3V9H0z" fill="#fff" /><path d="M2 3h8M2 5.500h8" stroke="#333" /></svg>
          <span className="absolute -right-[4px] -bottom-[6px] flex size-[11px] items-center justify-center rounded-full border border-[#888] bg-[#333] text-[8px] leading-none">1</span>
        </button>
        <i className="ml-px h-[30px] w-px bg-[#555]" />
      </div>
    </footer>
  );
}

export default function App() {
  return (
    <div className="flex min-h-screen justify-center bg-black">
      <div className="flex w-4/5 flex-col overflow-hidden font-['Open_Sans','Noto_Sans_CJK_SC',sans-serif]">
        <TitleBar />
        <Ribbon />
        <TopRuler />
        <div className="flex flex-1">
          <SideRuler />
          <Document />
          <VScroll />
        </div>
        <HScroll />
        <StatusBar />
        <Taskbar />
      </div>
    </div>
  );
}
